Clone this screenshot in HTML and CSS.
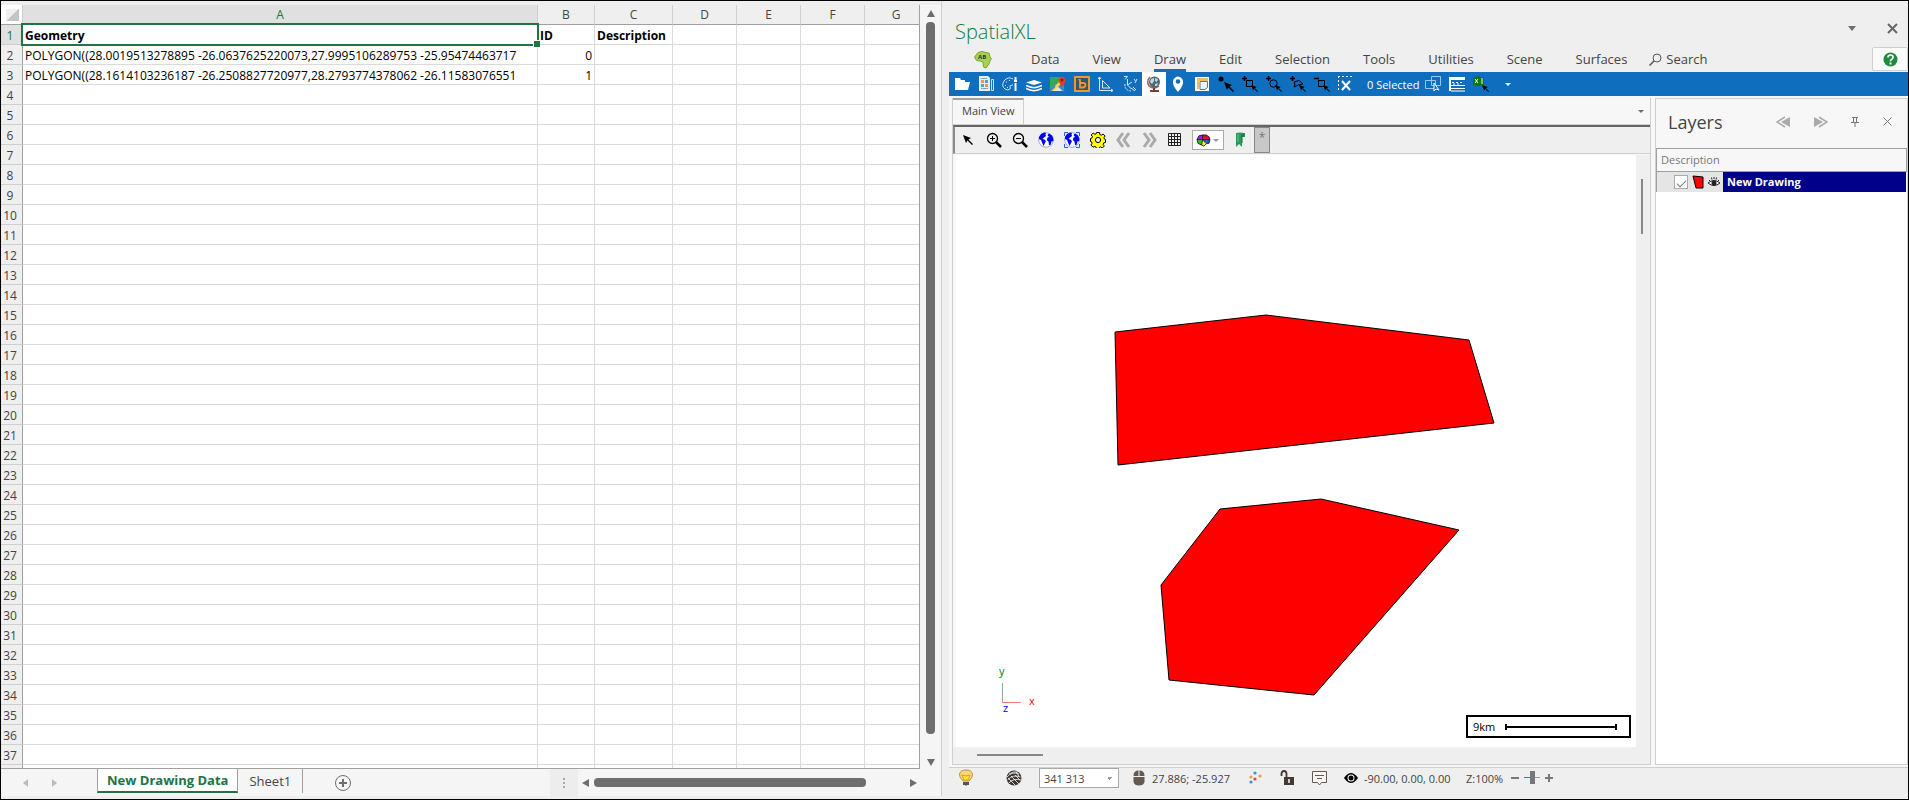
FILE: index.html
```html
<!DOCTYPE html>
<html lang="en">
<head>
  <meta charset="UTF-8" />
  <meta name="viewport" content="width=device-width, initial-scale=1.0"/>
  <title>SpatialXL</title>
  <link rel="stylesheet" href="styles.css">
</head>
<body>
  <svg class="defs" aria-hidden="true">
    <symbol id="cursor" viewBox="0 0 10 10"><path d="M0 0l8 3-2.500 1.500L10 9 9 10 4.500 5.500 3 8z"/></symbol>
    <symbol id="world" viewBox="0 0 16 16">
      <circle cx="8" cy="8" r="7.300" fill="#fff" stroke="#7a92ff" stroke-width=".800"/>
      <path d="M1 5l2-3 3-1.500L8 1 7.500 2.500 8 4 6 5.500 4.500 7l2 .500L8 9 7 11l-1.500 3-1.500-3.500L3 8 1 7zM9.500 3L11 1.500 14 3.500l1.300 3V9l-1.800.500L12.500 13 11 13l-.500-3.500L8.800 8 9.500 5.500l1.500-.500z" fill="#0000f0"/>
    </symbol>
  </svg>

  <main class="app">
    <section class="excel">
      <div class="sheet-area">
        <div class="sheet">
          <table class="grid">
            <colgroup>
              <col class="col-head"><col class="col-a"><col class="col-b"><col class="col-c">
              <col class="col-std"><col class="col-std"><col class="col-std"><col>
            </colgroup>
            <thead>
              <tr>
                <th class="corner"></th><th class="active">A</th><th>B</th><th>C</th><th>D</th><th>E</th><th>F</th><th>G</th>
              </tr>
            </thead>
            <tbody id="rows"></tbody>
          </table>
        </div>
        <div class="vscroll">
          <i class="tri up"></i>
          <div class="thumb"></div>
          <i class="tri down"></i>
        </div>
      </div>
      <div class="tabs">
        <div class="tab-nav"><i class="tri left pale"></i><i class="tri right pale"></i></div>
        <button class="tab current">New Drawing Data</button>
        <button class="tab">Sheet1</button>
        <button class="add-sheet" aria-label="New sheet">
          <svg width="18" height="18" viewBox="0 0 18 18"><circle cx="9" cy="9" r="7.500" fill="none" stroke="#6e6e6e"/><path d="M9 5v8M5 9h8" stroke="#6e6e6e" stroke-width="2"/></svg>
        </button>
        <div class="splitter"><i></i><i></i><i></i></div>
        <div class="hscroll">
          <i class="tri left"></i>
          <div class="thumb"></div>
          <i class="tri right"></i>
        </div>
      </div>
    </section>

    <section class="pane">
      <header class="title-bar">
        <h1>SpatialXL</h1>
        <button class="win-btn" aria-label="Options"><i class="tri down"></i></button>
        <button class="win-btn" aria-label="Close"><svg width="11" height="11" viewBox="0 0 11 11"><path d="M1 1l9 9M10 1l-9 9" stroke="#666" stroke-width="2"/></svg></button>
      </header>

      <nav class="menu">
        <svg class="logo" width="18" height="18" viewBox="0 0 18 18"><path d="M4 1.500L8 .500l4 1 3 .500 1 4 1.500 1.500L16 10l-1 3-3 4-2.500-1L9 11 6 10 2.500 9.500.500 6z" fill="#a9d04e" stroke="#7ba335"/><text x="4" y="8" font-size="6" font-weight="700" fill="#153a4d">AB</text></svg>
        <a href="#">Data</a>
        <a href="#">View</a>
        <a href="#" class="open">Draw</a>
        <a href="#">Edit</a>
        <a href="#">Selection</a>
        <a href="#">Tools</a>
        <a href="#">Utilities</a>
        <a href="#">Scene</a>
        <a href="#">Surfaces</a>
        <a href="#" class="search"><svg width="13" height="13" viewBox="0 0 13 13"><circle cx="8" cy="5" r="4" fill="none" stroke="#555"/><path d="M5 8l-4.500 4.500" stroke="#555" stroke-width="1.500"/></svg>Search</a>
        <button class="help" aria-label="Help"><svg width="15" height="15" viewBox="0 0 15 15"><circle cx="7.500" cy="7.500" r="7" fill="#218a3c"/><path d="M5 5.500q0-2.500 2.500-2.500t2.500 2.300q0 1.200-1.300 1.900T7.500 9.300" fill="none" stroke="#fff" stroke-width="1.700"/><path d="M6.500 10.500h2v2h-2z" fill="#fff"/></svg></button>
      </nav>

      <div class="ribbon">
        <button aria-label="Open"><svg width="16" height="16" viewBox="0 0 16 16"><path d="M1 2h5l1 2h4v2h5l-2 8H1z" fill="#fff"/></svg></button>
        <button aria-label="Sheets"><svg width="16" height="16" viewBox="0 0 16 16"><path d="M1 0h9l2 2v13H1z" fill="#e7edf2"/><path d="M3 2.500h6M3 12.500h7" stroke="#8ba2b7"/><path d="M3 4h3v3H3zM7 8h3v3H7z" fill="#e79a4f"/><path d="M7 4h3v3H7zM3 8h3v3H3z" fill="#5a9bd0"/><path d="M13.500 3.500h2v11h-2z" fill="none" stroke="#cfe0ee"/></svg></button>
        <button aria-label="Palette"><svg width="16" height="16" viewBox="0 0 16 16"><path d="M11 3Q6 0 2 5q-3 5 1 8 3 2 5 0 1-1 0-2-1-2 3-2" fill="none" stroke="#cfe3f5"/><path d="M4 6h1M7 4.500h1M3 9.500h1M5 11.500h1" stroke="#cfe3f5"/><path d="M13.500 1v3M13.500 7v8" stroke="#fff" stroke-width="2"/><path d="M12 5h3" stroke="#fff" stroke-width="2"/></svg></button>
        <button aria-label="Layers"><svg width="16" height="16" viewBox="0 0 16 16"><path d="M0 6.500l8-2.500 8 2.500L8 9z" fill="#fff"/><path d="M0 9.500q8 4.500 16 0M0 12.500q8 4.500 16 0" fill="none" stroke="#fff" stroke-width="1.500"/></svg></button>
        <button aria-label="Google map"><svg width="16" height="16" viewBox="0 0 16 16"><path d="M0 1h14v14H0z" fill="#34a853"/><path d="M6 9l7 6H1z" fill="#dfe6ee"/><path d="M0 15L11 4l2 2-9 9z" fill="#ffd84d"/><path d="M0 15l5-5M9 10l5 5" stroke="#4285f4" stroke-width="2"/><path d="M12 11Q8 6 8.700 3 9.700.500 12 .500T15.300 3Q16 6 12 11z" fill="#e63a2c"/><circle cx="12" cy="4" r="1.500" fill="#8a1a12"/></svg></button>
        <button aria-label="Bing map"><svg width="16" height="16" viewBox="0 0 16 16"><path d="M1 1h14v14H1z" fill="#3b5568" stroke="#f0982c" stroke-width="2"/><path d="M4.500 3.500l1.500.500v7.500h3q2.500-.500 2.500-2.500T9 7H6" fill="none" stroke="#f0982c" stroke-width="1.800"/></svg></button>
        <button aria-label="Angle"><svg width="16" height="16" viewBox="0 0 16 16"><path d="M1.500 1v13.500H15M4.500 4.500V12H12z" fill="none" stroke="#d6e7f6"/><path d="M0 3l1.500-2L3 3M13 13l2 1.500L13 16" fill="none" stroke="#d6e7f6"/></svg></button>
        <button aria-label="Axes"><svg width="16" height="16" viewBox="0 0 16 16"><path d="M5.500 3v6l4 4M5.500 9L10 6M2 .500h3.500L3 3.500M9 12l4 3M12 3l1.500 2M15 3l-2 4M11 11l3 3" fill="none" stroke="#d6e7f6"/><path d="M3 8q-1 6 6 7" fill="none" stroke="#d6e7f6" stroke-dasharray="2 1"/></svg></button>
        <button class="on" aria-label="Globe"><svg width="16" height="16" viewBox="0 0 16 16"><path d="M4 1Q0 5 3 10q5 4 10 0" fill="none" stroke="#a35a45" stroke-width="1.500"/><circle cx="8.500" cy="6" r="5.500" fill="#4d6672"/><path d="M5 3l3-1 0 3-2 3-2-2zM9 2l3 1-1 3-2-1zM9 8l3-1-1 3-2 0z" fill="#b9dbe4"/><path d="M8 12v2M4 15h9" stroke="#704235" stroke-width="2"/></svg></button>
        <button aria-label="Pin"><svg width="16" height="16" viewBox="0 0 16 16"><path d="M8 16Q2 9 3 5q1-4 5-4.500Q12 1 13 5q1 4-5 11z" fill="#fff"/><circle cx="8" cy="5.500" r="2.300" fill="#106ebe"/></svg></button>
        <button aria-label="Layout"><svg width="16" height="16" viewBox="0 0 16 16"><path d="M1 1h14v14H1z" fill="#fff"/><path d="M3 2h11v3H5v8H3z" fill="#e9bb6b"/><path d="M6 5.500h7.500v6L11 13.500H6z" fill="#eef4fa" stroke="#55779a"/></svg></button>
        <button aria-label="Select point"><svg width="16" height="16" viewBox="0 0 16 16"><circle cx="3" cy="3" r="2.500"/><use href="#cursor" x="6" y="6" width="10" height="10"/></svg></button>
        <button aria-label="Select rectangle"><svg width="16" height="16" viewBox="0 0 16 16"><path d="M0 2.500h5M2.500 0v5" stroke="#000" stroke-width="1.500"/><path d="M4.500 4.500h6v6h-6z" fill="none" stroke="#000"/><use href="#cursor" x="9" y="9" width="7" height="7"/></svg></button>
        <button aria-label="Select circle"><svg width="16" height="16" viewBox="0 0 16 16"><path d="M0 2.500h5M2.500 0v5" stroke="#000" stroke-width="1.500"/><circle cx="7.500" cy="7.500" r="3.700" fill="none" stroke="#000"/><use href="#cursor" x="9" y="9" width="7" height="7"/></svg></button>
        <button aria-label="Select polygon"><svg width="16" height="16" viewBox="0 0 16 16"><path d="M0 2.500h5M2.500 0v5" stroke="#000" stroke-width="1.500"/><path d="M4 11l1-3-1-2 5-1.500L13 8 8 9z" fill="none" stroke="#000"/><use href="#cursor" x="9" y="9" width="7" height="7"/></svg></button>
        <button aria-label="Deselect rectangle"><svg width="16" height="16" viewBox="0 0 16 16"><path d="M0 2.500h5" stroke="#000" stroke-width="1.500"/><path d="M4.500 4.500h6v6h-6z" fill="none" stroke="#000"/><use href="#cursor" x="9" y="9" width="7" height="7"/></svg></button>
        <button aria-label="Clear selection"><svg width="16" height="16" viewBox="0 0 16 16"><path d="M0 .500h16M.500 0v16" stroke="#fff" stroke-dasharray="2 2"/><path d="M4 5l8 9M12 5l-8 9" stroke="#fff" stroke-width="2"/></svg></button>
        <span class="count">0 Selected</span>
        <button aria-label="Copy selection"><svg width="16" height="16" viewBox="0 0 16 16"><path d="M6.500.500h9v9h-9zM.500 4.500h10v8H.500z" fill="none" stroke="#9fc6ea"/><path d="M9 7v8l2-2 3 1z" fill="#106ebe" stroke="#fff"/></svg></button>
        <button aria-label="Attribute table"><svg width="16" height="16" viewBox="0 0 16 16"><path d="M0 1h16v3H0zM0 4h2v11H0z" fill="#fff"/><path d="M2 9.500h14M2 12.500h14M2 15h14" stroke="#fff"/><path d="M3 6.500h12M4 8h8" stroke="#fff" stroke-dasharray="2 2"/></svg></button>
        <button aria-label="Select from Excel"><svg width="16" height="16" viewBox="0 0 16 16"><path d="M0 1l7-1v10L0 9zM7 1h4v8H7z" fill="#08780f"/><path d="M2 3l3 4M5 3L2 7M8 3h2M8 5h2M8 7h2" stroke="#fff"/><use href="#cursor" x="9" y="9" width="7" height="7"/></svg></button>
        <i class="tri down white"></i>
      </div>

      <div class="workspace">
        <section class="view">
          <div class="view-tabs">
            <button class="view-tab">Main View</button>
            <i class="tri down small"></i>
          </div>
          <div class="view-tools">
            <button aria-label="Pointer"><svg width="16" height="16" viewBox="0 0 16 16"><use href="#cursor" x="3" y="3" width="10" height="10"/></svg></button>
            <button aria-label="Zoom in"><svg width="16" height="16" viewBox="0 0 16 16"><circle cx="6.500" cy="6.500" r="5" fill="none" stroke="#000" stroke-width="1.300"/><path d="M4 6.500h5M6.500 4v5" stroke="#000"/><path d="M10 10l5 5" stroke="#000" stroke-width="2.500"/></svg></button>
            <button aria-label="Zoom out"><svg width="16" height="16" viewBox="0 0 16 16"><circle cx="6.500" cy="6.500" r="5" fill="none" stroke="#000" stroke-width="1.300"/><path d="M4 6.500h5" stroke="#000"/><path d="M10 10l5 5" stroke="#000" stroke-width="2.500"/></svg></button>
            <button aria-label="Zoom all"><svg width="16" height="16"><use href="#world" width="16" height="16"/></svg></button>
            <button aria-label="Zoom selected"><svg width="16" height="16"><use href="#world" width="16" height="16"/><path d="M.500 4V.500H4M12 .500h3.500V4M15.500 12v3.500H12M4 15.500H.500V12" fill="none" stroke="#2b5cff"/></svg></button>
            <button aria-label="Settings"><svg width="16" height="16" viewBox="0 0 16 16"><path d="M6.500.500h3l.300 2 1.500.700 1.800-1.200 2 2-1.200 1.800.600 1.400 1 .300v3l-1.700.300-.700 1.500 1.200 1.700-2 2-1.800-1.200-1 .500-.300 1.200h-2.700l-.500-1.500-1.300-.500L3 15.200.900 13l1.200-1.800-.600-1.400L.500 9.500v-3l1.300-.300.700-1.500L1.200 3l2-2L5 2.300l1.200-.500z" fill="#ff0" stroke="#000"/><circle cx="8" cy="8" r="2.600" fill="#efefef" stroke="#000"/></svg></button>
            <button aria-label="Previous view"><svg width="16" height="16" viewBox="0 0 16 16"><path d="M7 1L2 8l5 7M13 1L8 8l5 7" fill="none" stroke="#aaa" stroke-width="3"/></svg></button>
            <button aria-label="Next view"><svg width="16" height="16" viewBox="0 0 16 16"><path d="M2 1l5 7-5 7M8 1l5 7-5 7" fill="none" stroke="#aaa" stroke-width="3"/></svg></button>
            <button aria-label="Grid"><svg width="14" height="14" viewBox="0 0 14 14"><path d="M.500.500h12v12H.500zM.500 3.500h12M.500 6.500h12M.500 9.500h12M3.500.500v12M6.500.500v12M9.500.500v12" fill="none" stroke="#222"/></svg></button>
            <button class="color-pick" aria-label="Colours">
              <svg width="15" height="13" viewBox="0 0 16 14"><path d="M7 6L1 6l2-4 4-1z" fill="#a020f0"/><path d="M7 6V1h4l3 2 1 3z" fill="#e0103c"/><path d="M7 6h8l-1 4-3 0z" fill="#2c50e0"/><path d="M7 6l4 4-3 3-2-1z" fill="#ff0"/><path d="M7 6l-1 6-4-2-1-4z" fill="#1ecc1e"/><path d="M7 1v5M1 6h14M7 6l4 4.500M7 6l-1 6M3 2l4-1h4l3 2 1 3-1 4-3 .500-2.500 2.500-2.500-1-4-2-1-4z" fill="none" stroke="#000" stroke-width=".800"/></svg>
              <i class="tri down small pale-grey"></i>
            </button>
            <button aria-label="Bookmark"><svg width="12" height="16" viewBox="0 0 12 16"><path d="M2 1q4-1 8 0 1.500 1 1 4H8v10l-3-3-3 3V8z" fill="#2c9a5c"/><path d="M8 2v9M10.500 1L9 5" stroke="#146c3b"/><path d="M4 2v8" stroke="#66c08c"/></svg></button>
            <button class="star" aria-label="Favourite">*</button>
          </div>
          <div class="canvas-row">
            <div class="canvas">
              <svg class="map" viewBox="0 0 680 593" preserveAspectRatio="xMinYMin meet">
                <g fill="#f00" stroke="#000">
                  <polygon points="159,177 310,160 513,185 538,268 162,310"/>
                  <polygon points="264,354 365,344 503,375 358,540 213,525 205,430"/>
                </g>
                <path d="M46.500 528v19" stroke="#8fae8f"/>
                <path d="M46 547.500h19" stroke="#ff7a7a"/>
                <text class="axis" x="43" y="520" fill="#008000">y</text>
                <text class="axis" x="73" y="550" fill="#f00">x</text>
                <text class="axis" x="47" y="557" fill="#00f">z</text>
              </svg>
              <div class="scale">9km<i></i></div>
            </div>
            <div class="map-vscroll"><i></i></div>
          </div>
          <div class="map-hscroll"><i></i></div>
        </section>

        <aside class="layers">
          <header>
            <h2>Layers</h2>
            <button aria-label="Collapse"><svg width="14" height="12" viewBox="0 0 14 12"><path d="M14 1v10L5 6z" fill="#aaa"/><path d="M9 1L1 6l8 5" fill="none" stroke="#aaa" stroke-width="1.500"/></svg></button>
            <button aria-label="Expand"><svg width="14" height="12" viewBox="0 0 14 12"><path d="M0 1v10l9-5z" fill="#aaa"/><path d="M5 1l8 5-8 5" fill="none" stroke="#aaa" stroke-width="1.500"/></svg></button>
            <button aria-label="Pin"><svg width="8" height="10" viewBox="0 0 8 10"><path d="M1 .500h6M2.500 0v5M5.500 0v5M0 5.500h8M4 6v4" stroke="#777"/></svg></button>
            <button aria-label="Close layers"><svg width="9" height="9" viewBox="0 0 9 9"><path d="M.500.500l8 8M8.500.500l-8 8" stroke="#777"/></svg></button>
          </header>
          <div class="list-head">Description</div>
          <div class="layer">
            <span class="layer-icons">
              <input type="checkbox" id="layer-1" checked>
              <svg width="12" height="14" viewBox="0 0 12 14"><path d="M1 1l10 1v11H4L3 9z" fill="#f00" stroke="#000"/></svg>
              <svg width="12" height="12" viewBox="0 0 12 12"><path d="M0 7q6-5 12 0-6 5-12 0z" fill="#fff" stroke="#222"/><circle cx="6" cy="7" r="2.500" fill="#222"/><path d="M1 4l1 1M3.500 1.500l.5 2M6 1v2M8.500 1.500l-.5 2M11 4l-1 1" stroke="#222"/></svg>
            </span>
            <label for="layer-1">New Drawing</label>
          </div>
        </aside>
      </div>

      <footer class="status">
        <svg class="bulb" width="16" height="18" viewBox="0 0 16 18"><path d="M5 12Q1 8 1.500 5 2.500 1 8 1t6.500 4q.500 3-3.500 7z" fill="#fbd77c" stroke="#c88a3c"/><path d="M6 11L4 6l4 1 4-1-2 5z" fill="#ffe93b" stroke="#d7a21c"/><path d="M5 13h6v3H9l-1 1-1-1H5z" fill="#555"/></svg>
        <svg class="ball" width="16" height="16" viewBox="0 0 16 16"><circle cx="8" cy="8" r="7.500" fill="#3a3633"/><path d="M1 7q5-6 12-3M3 4q5-3 9-2M1.500 10Q7 4 14.500 7M3 13Q7 8 15 10M2 8l7 7M5 6l8 8M9 5l5 5M10 2l3 4" fill="none" stroke="#e8e8e8" stroke-width=".900"/></svg>
        <select aria-label="Scale"><option>341 313</option></select>
        <svg class="mouse" width="12" height="16" viewBox="0 0 12 16"><path d="M.500 6q0-5.500 5-5.500V6zM6.500.500q5 0 5 5.500h-5zM.500 7h11v5q-1 3.500-5.500 3.500T.500 12z" fill="#665950"/></svg>
        <span class="coords">27.886; -25.927</span>
        <svg class="dots" width="14" height="14" viewBox="0 0 14 14"><g fill="#3c93d0"><circle cx="7" cy="2" r="1.600"/><circle cx="3" cy="11" r="1.600"/></g><g fill="#f2994a"><circle cx="12" cy="5" r="1.600"/><circle cx="3" cy="6" r="1.600"/></g><circle cx="7" cy="8" r="1.600" fill="#e8443a"/></svg>
        <svg class="lock" width="15" height="16" viewBox="0 0 15 16"><path d="M1.500 6V4q0-3 2.500-3t2.500 3v3" fill="none" stroke="#443a33" stroke-width="1.800"/><path d="M4 7h10v8H4z" fill="#443a33"/><path d="M9 9v4" stroke="#fff" stroke-width="1.500"/></svg>
        <svg class="note" width="15" height="15" viewBox="0 0 15 15"><path d="M.500.500h14v11H9.500L7.500 14 5.500 11.500h-5z" fill="#f7f7f7" stroke="#665950"/><path d="M3 4.500h9M5 7.500h5" stroke="#665950"/></svg>
        <svg class="eye" width="14" height="12" viewBox="0 0 14 12"><path d="M0 6q7-10 14 0-7 10-14 0z"/><circle cx="7" cy="6" r="3.500" fill="#fff"/><circle cx="7" cy="6" r="2.500"/></svg>
        <span class="rotation">-90.00, 0.00, 0.00</span>
        <span class="zoom">Z:100%</span>
        <svg width="43" height="14" viewBox="0 0 43 14"><path d="M0 7h8M34 7h8M38 3v8" stroke="#777" stroke-width="2"/><path d="M13 6.500h7" stroke="#2a7bc8"/><path d="M24 6.500h5" stroke="#999"/><path d="M19 0h5v13h-5z" fill="#777"/></svg>
      </footer>
    </section>
  </main>

  <script>
    const cells = {
      1: ['Geometry', 'ID', 'Description'],
      2: ['POLYGON((28.0019513278895 -26.0637625220073,27.9995106289753 -25.95474463717', '0', ''],
      3: ['POLYGON((28.1614103236187 -26.2508827720977,28.2793774378062 -26.11583076551', '1', '']
    };
    const lastRow = 37;

    // one extra row without a number fills the strip above the sheet tabs
    let html = '';
    for (let r = 1; r <= lastRow + 1; r++) {
      const row = cells[r] || [];
      html += `<tr class="${r === 1 ? 'first' : ''}"><th>${r > lastRow ? '' : r}</th>`;
      for (let c = 0; c < 7; c++) {
        const cls = r === 1 && c === 0 ? 'selected' : c === 1 && r > 1 ? 'num' : '';
        html += `<td class="${cls}">${row[c] || ''}</td>`;
      }
      html += '</tr>';
    }
    document.getElementById('rows').innerHTML = html;
  </script>
</body>
</html>
```
FILE: styles.css
```css
* {
  box-sizing: border-box;
}

body {
  margin: 0;
  font-family: "Open Sans", "Noto Sans", sans-serif;
  font-size: 12px;
  color: #444;
  background: #efefef;
}

button {
  font: inherit;
  color: inherit;
  background: none;
  border: 0;
  padding: 0;
}

a {
  color: inherit;
  text-decoration: none;
}

svg {
  display: block;
  flex: none;
}

.defs {
  position: absolute;
  width: 0;
  height: 0;
}

.app {
  display: grid;
  grid-template-columns: minmax(0, 940fr) minmax(0, 967fr);
  height: 100vh;
  border: 1px solid #000;
  padding-bottom: 3px;
}

/* small arrows */
.tri {
  width: 0;
  height: 0;
  flex: none;
  border: 4px solid transparent;
}

.tri.up { border-bottom: 7px solid #6e6e6e; border-top: 0; }
.tri.down { border-top: 5px solid #6e6e6e; border-bottom: 0; }
.tri.left { border-right: 7px solid #6e6e6e; border-left: 0; }
.tri.right { border-left: 7px solid #6e6e6e; border-right: 0; }
.tri.left.pale { border-right: 5px solid #bbb; }
.tri.right.pale { border-left: 5px solid #bbb; }
.tri.small { border-width: 3px 3px 0; }
.tri.white { border-width: 3px 3px 0; border-top-color: #fff; }
.tri.pale-grey { border-top-color: #999; }

/* spreadsheet */
.excel {
  display: flex;
  flex-direction: column;
  min-height: 0;
  background: #f5f5f5;
}

.sheet-area {
  display: flex;
  flex: 1;
  min-height: 0;
  padding-top: 4px;
  background: #efefef;
}

.sheet {
  flex: 1;
  min-width: 0;
  overflow: hidden;
  border-right: 1px solid #a0a0a0;
  border-bottom: 1px solid #a0a0a0;
}

.grid {
  width: calc(100% + 9px);
  table-layout: fixed;
  border-collapse: separate;
  border-spacing: 0;
  background: #fff;
}

.col-head { width: 22px; }
.col-a { width: 515px; }
.col-b { width: 57px; }
.col-c { width: 78px; }
.col-std { width: 64px; }

.grid tr {
  height: 20px;
}

.grid th,
.grid td {
  padding: 2px 2px 0;
  height: 20px;
  line-height: 17px;
  border-right: 1px solid #dadada;
  border-bottom: 1px solid #dadada;
  white-space: nowrap;
}

.grid th {
  padding: 2px 0 0;
  font-size: 12px;
  font-weight: 400;
  background: #efefef;
  border-color: #cfcfcf;
}

.grid thead th {
  padding-top: 0;
  border-bottom-color: #a0a0a0;
}

.grid tbody th {
  border-right-color: #a0a0a0;
  padding-right: 3px;
}

.grid thead .active,
.grid .first th {
  background: #e0e0e0;
  color: #217346;
}

.grid thead .corner {
  background: linear-gradient(135deg, #efefef 50%, #c4c4c4 50%) content-box #efefef;
  padding: 4px 3px 3px 5px;
}

.grid td {
  font-size: 12px;
  color: #000;
}

.grid .num {
  text-align: right;
}

.grid .first td {
  font-weight: 700;
}

.grid .selected {
  position: relative;
}

.selected::before {
  content: "";
  position: absolute;
  inset: -2px;
  border: 2px solid #217346;
}

.selected::after {
  content: "";
  position: absolute;
  right: -3px;
  bottom: -3px;
  width: 6px;
  height: 6px;
  background: #217346;
  border: 1px solid #fff;
  border-right: 0;
  border-bottom: 0;
}

.vscroll {
  display: flex;
  flex-direction: column;
  align-items: center;
  gap: 5px;
  width: 21px;
  padding: 5px 0 3px;
  background: #f5f5f5;
}

.vscroll .thumb {
  flex: 1;
  width: 9px;
  margin-bottom: 20px;
  background: #6e6e6e;
  border-radius: 4px;
}

.vscroll .down {
  border-top-width: 7px;
}

.tabs {
  display: flex;
  height: 27px;
}

.tab-nav {
  display: flex;
  align-items: center;
  gap: 24px;
  width: 96px;
  padding-left: 22px;
}

.tab {
  height: 24px;
  padding: 0 11px;
  font-size: 13px;
}

.tab.current {
  padding: 0 9px;
  background: #fff;
  color: #217346;
  font-weight: 700;
  border: solid #a0a0a0;
  border-width: 0 1px;
  border-bottom: 2px solid #217346;
}

.tab + .tab {
  border-right: 1px solid #a0a0a0;
}

.add-sheet {
  margin-left: 31px;
}

.splitter {
  display: flex;
  flex-direction: column;
  align-items: center;
  justify-content: center;
  gap: 2px;
  width: 28px;
  margin-left: auto;
  background: #ededed;
}

.splitter i {
  width: 2px;
  height: 2px;
  background: #aaa;
}

.hscroll {
  display: flex;
  align-items: center;
  gap: 5px;
  width: 363px;
  padding: 0 24px 0 4px;
}

.hscroll .thumb {
  flex: 1;
  height: 9px;
  margin-right: 39px;
  background: #6e6e6e;
  border-radius: 4px;
}

/* task pane */
.pane {
  display: flex;
  flex-direction: column;
  min-width: 0;
  min-height: 0;
  padding-left: 7px;
  border-left: 1px solid #cfcfcf;
}

.title-bar {
  display: flex;
  align-items: center;
  gap: 31px;
  height: 46px;
  padding: 9px 10px 0 6px;
}

.title-bar h1 {
  flex: 1;
  margin: 0;
  font-size: 20px;
  font-weight: 300;
  line-height: 28px;
  padding-top: 6px;
  color: #107c41;
}

.win-btn {
  display: flex;
  align-items: center;
  height: 20px;
}

.menu {
  display: flex;
  gap: 33px;
  height: 25px;
  padding-left: 25px;
  font-size: 13px;
}

.menu .logo {
  margin: 4px 6px 0 0;
}

.menu a {
  height: 25px;
  line-height: 25px;
}

.menu .open {
  border-bottom: 3px solid #106ebe;
}

.menu .search {
  display: flex;
  align-items: center;
  gap: 4px;
  margin-left: -11px;
}

.help {
  display: flex;
  align-items: center;
  justify-content: center;
  width: 36px;
  height: 24px;
  margin-left: auto;
  background: #fafafa;
  border: 1px solid #d0d0d0;
  border-radius: 2px;
}

.ribbon {
  display: flex;
  flex: none;
  align-items: center;
  height: 24px;
  padding-left: 1px;
  background: #106ebe;
  color: #fff;
}

.ribbon button {
  display: flex;
  align-items: center;
  justify-content: center;
  width: 24px;
  height: 24px;
}

.ribbon .on {
  background: #fff;
}

.ribbon .count {
  width: 63px;
  padding-left: 9px;
  font-size: 11px;
  white-space: nowrap;
}

.ribbon .white {
  margin-left: 12px;
}

.workspace {
  display: flex;
  flex: 1;
  gap: 4px;
  min-height: 0;
  padding: 2px 0 2px 3px;
  background: #f7f7f7;
}

.view {
  display: flex;
  flex: 1;
  flex-direction: column;
  min-width: 0;
  border: 1px solid #cfcfcf;
  border-top: 0;
}

.view-tabs {
  display: flex;
  align-items: center;
  justify-content: space-between;
  height: 27px;
  padding-right: 6px;
  border-bottom: 1px solid #cfcfcf;
}

.view-tab {
  align-self: stretch;
  padding: 0 9px 4px;
  font-size: 11px;
  border-top: 2px solid #a0a0a0;
  border-right: 1px solid #cfcfcf;
}

.view-tools {
  display: flex;
  align-items: center;
  gap: 10px;
  height: 29px;
  padding-left: 5px;
  background: #efefef;
  border-top: 2px solid #666;
  border-left: 2px solid #888;
  border-bottom: 1px solid #cfcfcf;
}

.color-pick {
  display: flex;
  align-items: center;
  justify-content: space-between;
  width: 32px;
  height: 20px;
  padding: 0 4px 0 3px;
  background: #fff;
  border: 1px solid #aaa;
}

.view-tools .star {
  align-self: stretch;
  width: 16px;
  margin-left: -2px;
  padding-bottom: 4px;
  font-size: 12px;
  line-height: 18px;
  color: #777;
  background: #c8c8c8;
  border: 1px solid #888;
}

.canvas-row {
  display: flex;
  flex: 1;
  min-height: 0;
  padding: 1px 0 0 3px;
}

.canvas {
  position: relative;
  flex: 1;
  min-width: 0;
  overflow: hidden;
  background: #fff;
}

.map {
  width: 100%;
}

.axis {
  font-size: 11px;
}

.scale {
  position: absolute;
  right: 5px;
  bottom: 9px;
  display: flex;
  align-items: center;
  gap: 10px;
  width: 165px;
  height: 23px;
  padding: 0 12px 0 5px;
  font-size: 11px;
  color: #000;
  background: #fff;
  border: 2px solid #000;
}

.scale i {
  flex: 1;
  height: 6px;
  border: solid #000;
  border-width: 0 2px;
  background: linear-gradient(#000, #000) center / 100% 2px no-repeat;
}

.map-vscroll {
  width: 14px;
  padding: 24px 0 0 5px;
  background: #efefef;
}

.map-vscroll i {
  display: block;
  width: 2px;
  height: 55px;
  background: #888;
}

.map-hscroll {
  height: 17px;
  padding: 7px 0 0 24px;
  background: #efefef;
}

.map-hscroll i {
  display: block;
  width: 66px;
  height: 2px;
  background: #888;
}

.layers {
  display: flex;
  flex-direction: column;
  width: 253px;
  border: 1px solid #cfcfcf;
  background: #fff;
}

.layers header {
  display: flex;
  align-items: center;
  justify-content: space-between;
  height: 49px;
  padding: 0 15px 4px 12px;
  background: #f7f7f7;
}

.layers h2 {
  flex: 0 0 84px;
  margin: 0;
  font-size: 18px;
  font-weight: 400;
}

.list-head {
  height: 24px;
  padding-left: 4px;
  line-height: 22px;
  font-size: 11px;
  color: #777;
  background: #f7f7f7;
  border: 1px solid #a0a0a0;
}

.layer {
  display: flex;
  height: 20px;
  padding-right: 1px;
  border-left: 1px solid #a0a0a0;
}

.layer-icons {
  display: flex;
  align-items: center;
  justify-content: flex-end;
  gap: 4px;
  width: 66px;
  padding-right: 3px;
  background: #e5e5e5;
}

.layer-icons input {
  appearance: none;
  display: flex;
  align-items: center;
  justify-content: center;
  width: 14px;
  height: 14px;
  margin: 0;
  background: #fff;
  border: 1px solid #aaa;
}

.layer-icons input:checked::before {
  content: "";
  width: 8px;
  height: 4px;
  border: solid #777;
  border-width: 0 0 1px 1px;
  transform: rotate(-45deg);
}

.layer label {
  flex: 1;
  padding-left: 4px;
  line-height: 20px;
  font-size: 11px;
  font-weight: 700;
  color: #fff;
  background: #00008b;
}

.status {
  display: flex;
  align-items: center;
  height: 29px;
  padding: 0 0 8px 9px;
  border-top: 1px solid #cfcfcf;
  font-size: 11px;
  white-space: nowrap;
}

.ball { margin-left: 32px; }

.status select {
  width: 80px;
  height: 20px;
  margin: 0 14px 0 17px;
  padding: 0 4px;
  font: inherit;
  color: inherit;
  appearance: none;
  background:
    linear-gradient(45deg, transparent 50%, #999 50%) right 8px center / 3px 3px no-repeat,
    linear-gradient(-45deg, transparent 50%, #999 50%) right 5px center / 3px 3px no-repeat,
    #fff;
  border: 1px solid #aaa;
  border-radius: 0;
}

.coords {
  width: 103px;
  padding-left: 7px;
}

.lock { margin-left: 18px; }

.note { margin: 0 17px; }

.rotation {
  width: 108px;
  padding-left: 6px;
}

.zoom {
  width: 45px;
}
```
